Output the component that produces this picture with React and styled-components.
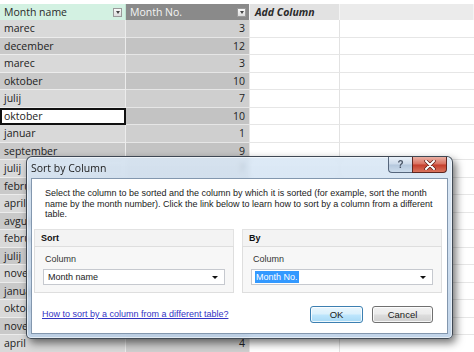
import React from "react";
import styled, { createGlobalStyle } from "styled-components";

const GlobalStyle = createGlobalStyle`
  html, body {
    margin: 0;
    padding: 0;
    background: #ffffff;
  }
`;

const rows = [
  ["marec", 3],
  ["december", 12],
  ["marec", 3],
  ["oktober", 10],
  ["julij", 7],
  ["oktober", 10],
  ["januar", 1],
  ["september", 9],
  ["julij", 7],
  ["februar", 2],
  ["april", 4],
  ["avgust", 8],
  ["februar", 2],
  ["julij", 7],
  ["november", 11],
  ["januar", 1],
  ["oktober", 10],
  ["november", 11],
  ["april", 4],
];

const SELECTED = 5;

const App = () => {
  return (
    <>
      <GlobalStyle />
      <Sheet>
        <Grid>
          <HeaderCell $kind="name">
            <span>Month name</span>
            <FilterButton>
              <Caret />
            </FilterButton>
          </HeaderCell>
          <HeaderCell $kind="number">
            <span>Month No.</span>
            <FilterButton>
              <Caret />
            </FilterButton>
          </HeaderCell>
          <HeaderCell $kind="add">
            <span>Add Column</span>
          </HeaderCell>
          <HeaderCell $kind="empty" />

          {rows.map(([name, no], i) => (
            <React.Fragment key={i}>
              <NameCell $alt={i % 2 === 1} $selected={i === SELECTED}>
                {name}
              </NameCell>
              <NumberCell $alt={i % 2 === 1}>{no}</NumberCell>
              <BlankCell $first />
              <BlankCell />
            </React.Fragment>
          ))}
        </Grid>

        <Dialog>
          <TitleBar>
            <Title>Sort by Column</Title>
            <CaptionButtons>
              <HelpButton>?</HelpButton>
              <CloseButton>
                <svg width="12" height="10" viewBox="0 0 12 10">
                  <path
                    d="M2 1 L10 9 M10 1 L2 9"
                    stroke="#5a1d16"
                    strokeWidth="3.4"
                    strokeLinecap="round"
                  />
                  <path
                    d="M2 1 L10 9 M10 1 L2 9"
                    stroke="#ffffff"
                    strokeWidth="2"
                    strokeLinecap="round"
                  />
                </svg>
              </CloseButton>
            </CaptionButtons>
          </TitleBar>

          <Client>
            <Description>
              Select the column to be sorted and the column by which it is sorted (for example, sort the month
              name by the month number). Click the link below to learn how to sort by a column from a different
              table.
            </Description>

            <Panels>
              <Panel>
                <PanelHeader>Sort</PanelHeader>
                <PanelBody>
                  <FieldLabel>Column</FieldLabel>
                  <Combo>
                    <ComboText>Month name</ComboText>
                    <ComboArrow />
                  </Combo>
                </PanelBody>
              </Panel>
              <Panel>
                <PanelHeader>By</PanelHeader>
                <PanelBody>
                  <FieldLabel>Column</FieldLabel>
                  <Combo>
                    <ComboText $highlighted>Month No.</ComboText>
                    <ComboArrow />
                  </Combo>
                </PanelBody>
              </Panel>
            </Panels>

            <Footer>
              <HelpLink href="#">How to sort by a column from a different table?</HelpLink>
              <Buttons>
                <DialogButton $default>OK</DialogButton>
                <DialogButton>Cancel</DialogButton>
              </Buttons>
            </Footer>
          </Client>
        </Dialog>
      </Sheet>
    </>
  );
};

const Sheet = styled.div`
  position: relative;
  width: 474px;
  height: 352px;
  overflow: hidden;
  padding-top: 4px;
  box-sizing: border-box;
  background: #ffffff;
  font-family: "Open Sans", "Liberation Sans", sans-serif;
`;

const Grid = styled.div`
  display: grid;
  grid-template-columns: 126px 124px 90px 134px;
  grid-template-rows: 16px;
  grid-auto-rows: 17.5px;
`;

const headerBg = {
  name: "#d3f1e2",
  number: "#8a8a8a",
  add: "#e2e2e2",
  empty: "#ebebeb",
};

const HeaderCell = styled.div`
  display: flex;
  align-items: center;
  justify-content: space-between;
  padding: 0 3px 0 ${(p) => (p.$kind === "add" ? "5px" : "4px")};
  box-sizing: border-box;
  background: ${(p) => headerBg[p.$kind]};
  border-right: 1px solid ${(p) => (p.$kind === "name" ? "#bfe3d1" : "#f4f4f4")};
  font-size: 10.5px;
  color: ${(p) => (p.$kind === "number" ? "#f4f4f4" : "#2a2a2a")};
  font-weight: ${(p) => (p.$kind === "add" ? 700 : 400)};
  font-style: ${(p) => (p.$kind === "add" ? "italic" : "normal")};
  white-space: nowrap;
`;

const FilterButton = styled.div`
  width: 9px;
  height: 9px;
  box-sizing: border-box;
  border: 1px solid #9a9a9a;
  background: linear-gradient(#fafafa, #dcdcdc);
  display: flex;
  align-items: center;
  justify-content: center;
`;

const Caret = styled.div`
  width: 0;
  height: 0;
  border-left: 2.5px solid transparent;
  border-right: 2.5px solid transparent;
  border-top: 3px solid #444;
`;

const NameCell = styled.div`
  display: flex;
  align-items: center;
  padding-left: 4px;
  box-sizing: border-box;
  font-size: 10.5px;
  color: #222;
  white-space: nowrap;
  overflow: hidden;
  background: ${(p) => (p.$selected ? "#ffffff" : p.$alt ? "#c9c9c9" : "#d9d9d9")};
  border-bottom: 1px solid #ececec;
  border-right: 1px solid #ececec;
  ${(p) =>
    p.$selected &&
    `
    border: 2px solid #111;
    padding-left: 2px;
  `}
`;

const NumberCell = styled.div`
  display: flex;
  align-items: center;
  justify-content: flex-end;
  padding-right: 4px;
  box-sizing: border-box;
  font-size: 10.5px;
  color: #222;
  background: ${(p) => (p.$alt ? "#c3c3c3" : "#cfcfcf")};
  border-bottom: 1px solid #e6e6e6;
  border-right: 1px solid #e6e6e6;
`;

const BlankCell = styled.div`
  background: #ffffff;
  border-bottom: 1px solid #e6e6e6;
  border-right: ${(p) => (p.$first ? "1px solid #e2e2e2" : "none")};
`;

const Dialog = styled.div`
  position: absolute;
  left: 26px;
  top: 156px;
  width: 427px;
  height: 183px;
  box-sizing: border-box;
  display: flex;
  flex-direction: column;
  border: 1px solid rgba(40, 48, 58, 0.85);
  border-radius: 6px 6px 5px 5px;
  background: linear-gradient(rgba(214, 229, 244, 0.82), rgba(184, 206, 230, 0.86));
  backdrop-filter: blur(2px);
  box-shadow: inset 0 0 0 1px rgba(255, 255, 255, 0.55), 3px 4px 9px rgba(0, 0, 0, 0.55);
  font-family: "Liberation Sans", Arial, sans-serif;
`;

const TitleBar = styled.div`
  height: 21px;
  display: flex;
  align-items: flex-start;
  justify-content: space-between;
  padding: 0 5px 0 4px;
`;

const Title = styled.div`
  margin-top: 5px;
  font-size: 10.5px;
  line-height: 12px;
  color: #1b1b1b;
  font-family: "Open Sans", "Liberation Sans", sans-serif;
`;

const CaptionButtons = styled.div`
  display: flex;
`;

const HelpButton = styled.div`
  width: 24px;
  height: 16px;
  box-sizing: border-box;
  border: 1px solid #56667c;
  border-top: none;
  border-right: none;
  border-radius: 0 0 0 4px;
  background: linear-gradient(#e9f0f8, #ccdaea 48%, #b4c7dc 52%, #cddcec);
  display: flex;
  align-items: center;
  justify-content: center;
  font-size: 10px;
  font-weight: 700;
  color: #4a5566;
`;

const CloseButton = styled.div`
  width: 35px;
  height: 16px;
  box-sizing: border-box;
  border: 1px solid #5e2620;
  border-top: none;
  border-radius: 0 0 4px 0;
  background: linear-gradient(#eab0a4, #d96f5e 48%, #c43d2b 52%, #d9735c);
  display: flex;
  align-items: center;
  justify-content: center;
`;

const Client = styled.div`
  flex: 1;
  margin: 0 4px 4px 4px;
  background: #ffffff;
  border: 1px solid #8397ae;
  display: flex;
  flex-direction: column;
`;

const Description = styled.div`
  padding: 9px 14px 0 13px;
  font-size: 9px;
  line-height: 10.5px;
  color: #1a1a1a;
  height: 42px;
  box-sizing: border-box;
`;

const Panels = styled.div`
  display: grid;
  grid-template-columns: 1fr 1fr;
  gap: 8px;
  margin: 8px 5px 0 2px;
`;

const Panel = styled.div`
  display: flex;
  flex-direction: column;
`;

const PanelHeader = styled.div`
  height: 16px;
  display: flex;
  align-items: center;
  padding-left: 6px;
  font-size: 9px;
  font-weight: 700;
  color: #111;
  background: #f3f3f3;
  border-top: 1px solid #e2e2e2;
  border-left: 1px solid #e2e2e2;
  border-right: 1px solid #e2e2e2;
`;

const PanelBody = styled.div`
  padding: 6px 8px 7px 8px;
  background: #f7f7f7;
  border: 1px solid #dedede;
  display: flex;
  flex-direction: column;
  gap: 4px;
`;

const FieldLabel = styled.div`
  font-size: 9px;
  line-height: 12px;
  color: #333;
  padding-left: 2px;
`;

const Combo = styled.div`
  height: 16px;
  box-sizing: border-box;
  background: #ffffff;
  border: 1px solid #c6c9cf;
  display: flex;
  align-items: center;
  justify-content: space-between;
  padding: 0 6px 0 3px;
`;

const ComboText = styled.span`
  font-size: 9px;
  line-height: 12px;
  padding: 0 1px;
  color: ${(p) => (p.$highlighted ? "#ffffff" : "#1a1a1a")};
  background: ${(p) => (p.$highlighted ? "#3399ff" : "transparent")};
`;

const ComboArrow = styled.div`
  width: 0;
  height: 0;
  border-left: 3px solid transparent;
  border-right: 3px solid transparent;
  border-top: 3px solid #111;
`;

const Footer = styled.div`
  flex: 1;
  display: flex;
  align-items: center;
  justify-content: space-between;
  padding: 2px 14px 0 10px;
`;

const HelpLink = styled.a`
  font-size: 9px;
  color: #3333c4;
  text-decoration: underline;
`;

const Buttons = styled.div`
  display: flex;
  gap: 9px;
`;

const DialogButton = styled.div`
  width: ${(p) => (p.$default ? "53px" : "61px")};
  height: 17px;
  box-sizing: border-box;
  border-radius: 3px;
  border: 1px solid ${(p) => (p.$default ? "#3c7fb1" : "#707070")};
  background: ${(p) =>
    p.$default
      ? "linear-gradient(#eaf6fd, #d9f0fc 48%, #bee6fd 52%, #a7d9f5)"
      : "linear-gradient(#f2f2f2, #ebebeb 48%, #dddddd 52%, #cfcfcf)"};
  box-shadow: inset 0 0 0 1px rgba(255, 255, 255, 0.8);
  display: flex;
  align-items: center;
  justify-content: center;
  font-size: 9.5px;
  color: #1a1a1a;
`;

export default App;
